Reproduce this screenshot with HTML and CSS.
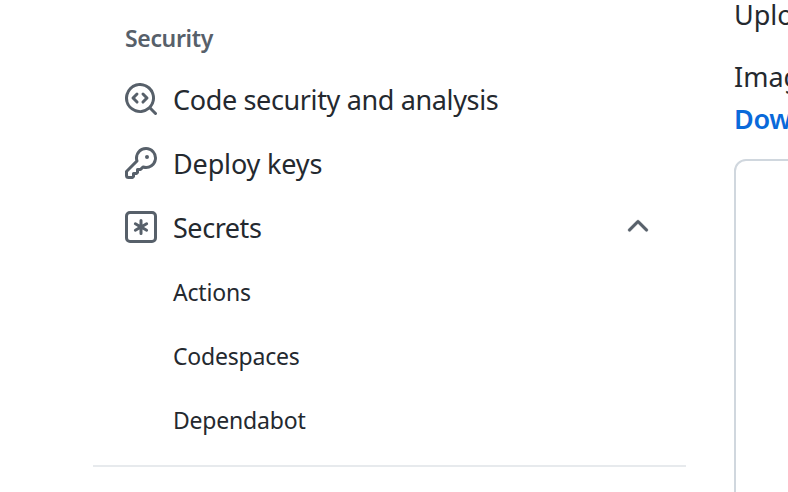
FILE: index.html
```html
<!DOCTYPE html>
<html lang="en">
<head>
<meta charset="utf-8">
<title>Settings</title>
<link rel="stylesheet" href="styles.css">
</head>
<body>
<div class="page">
  <nav class="sidebar">
    <h2 class="heading">Security</h2>
    <a class="item">
      <svg class="icon" viewBox="0 0 16 16"><path d="M8.47 4.97a.75.75 0 0 0 0 1.06L9.94 7.5 8.47 8.97a.75.75 0 1 0 1.06 1.06l2-2a.75.75 0 0 0 0-1.06l-2-2a.75.75 0 0 0-1.06 0ZM6.53 6.03a.75.75 0 0 0-1.06-1.06l-2 2a.75.75 0 0 0 0 1.06l2 2a.75.75 0 1 0 1.06-1.06L5.06 7.5l1.47-1.47Z"/><path d="M12.246 13.307a7.501 7.501 0 1 1 1.06-1.06l2.474 2.473a.749.749 0 1 1-1.06 1.06l-2.474-2.473ZM1.5 7.5a6.002 6.002 0 0 0 3.608 5.504 6.002 6.002 0 0 0 6.486-1.117.748.748 0 0 1 .292-.293A6 6 0 1 0 1.5 7.5Z"/></svg>
      <span class="label t-code">Code security and analysis</span>
    </a>
    <a class="item">
      <svg class="icon" viewBox="0 0 16 16"><path d="M10.5 0a5.499 5.499 0 1 1-1.288 10.848l-.932.932a.749.749 0 0 1-.53.22H7v.75a.749.749 0 0 1-.22.53l-.5.5a.749.749 0 0 1-.53.22H5v.75a.749.749 0 0 1-.22.53l-.5.5a.749.749 0 0 1-.53.22h-2A1.75 1.75 0 0 1 0 14.25v-2c0-.199.079-.389.22-.53l4.932-4.932A5.5 5.5 0 0 1 10.5 0Zm-4 5.5c-.001.431.069.86.205 1.269a.75.75 0 0 1-.181.768L1.5 12.56v1.69c0 .138.112.25.25.25h1.69l.06-.06v-1.19a.75.75 0 0 1 .75-.75h1.19l.06-.06v-1.19a.75.75 0 0 1 .75-.75h1.19l1.023-1.025a.75.75 0 0 1 .768-.18A4 4 0 1 0 6.5 5.5ZM11 6a1 1 0 1 1 0-2 1 1 0 0 1 0 2Z"/></svg>
      <span class="label t-keys">Deploy keys</span>
    </a>
    <a class="item">
      <svg class="icon" viewBox="0 0 16 16"><rect class="frame" x=".75" y=".75" width="14.5" height="14.5" rx="1.75"/><path d="M8 4a.75.75 0 0 1 .75.75V6.7l1.69-.975a.75.75 0 0 1 .75 1.3L9.5 8l1.69.976a.75.75 0 0 1-.75 1.298L8.75 9.3v1.951a.75.75 0 0 1-1.5 0V9.299l-1.69.976a.75.75 0 0 1-.75-1.3L6.5 8l-1.69-.975a.75.75 0 0 1 .75-1.3l1.69.976V4.75A.75.75 0 0 1 8 4Z"/></svg>
      <span class="label t-secrets">Secrets</span>
      <svg class="chevron" viewBox="0 0 16 16"><path d="M3.22 10.53a.749.749 0 0 1 0-1.06l4.25-4.25a.749.749 0 0 1 1.06 0l4.25 4.25a.749.749 0 1 1-1.06 1.06L8 6.811 4.28 10.53a.749.749 0 0 1-1.06 0Z"/></svg>
    </a>
    <a class="subitem">Actions</a>
    <a class="subitem">Codespaces</a>
    <a class="subitem">Dependabot</a>
    <hr class="rule">
  </nav>
  <main class="content">
    <p class="para first">Upload</p>
    <p class="para">Images</p>
    <p class="para link">Download</p>
    <div class="box"></div>
  </main>
</div>
</body>
</html>
```
FILE: styles.css
```css
* { box-sizing: border-box; }
body { margin: 0; background: #fff; color: #24292f; font-family: "Noto Sans", sans-serif; font-weight: 400; overflow: hidden; }
.page { display: flex; width: 788px; height: 492px; overflow: hidden; }
.sidebar { flex: none; width: 593px; margin-left: 93px; padding-top: 7px; }
.heading { margin: 0; height: 61px; padding-left: 32px; font-size: 23px; line-height: 63px; font-weight: 600; letter-spacing: -.35px; color: #57606a; white-space: nowrap; }
.item { display: flex; align-items: center; height: 64px; padding: 0 32px; }
.icon { flex: none; width: 32px; height: 32px; margin: -2px 16px 0 0; fill: #57606a; }
.frame { fill: none; stroke: #57606a; stroke-width: 1.5; }
.label { font-size: 27px; line-height: 42px; white-space: nowrap; }
.t-code { letter-spacing: -.36px; }
.t-keys { letter-spacing: -.15px; }
.t-secrets { letter-spacing: -.45px; }
.chevron { width: 32px; height: 32px; margin: -5px 0 0 auto; fill: #57606a; stroke: #57606a; stroke-width: .15; }
.subitem { display: block; height: 64px; padding-left: 80px; font-size: 23px; line-height: 64px; letter-spacing: -.2px; white-space: nowrap; }
.rule { margin: 13px 0 0; border: 0; height: 2px; background: #e7eaed; }
.content { flex: none; width: 400px; margin-left: 48px; }
.para { margin: 0; font-size: 27px; line-height: 42px; white-space: nowrap; }
.first { margin: -6px 0 20px; }
.link { color: #0969da; font-weight: 600; letter-spacing: -.3px; }
.box { height: 400px; margin-top: 19px; border: 2px solid #d0d7de; border-radius: 12px; }
```
